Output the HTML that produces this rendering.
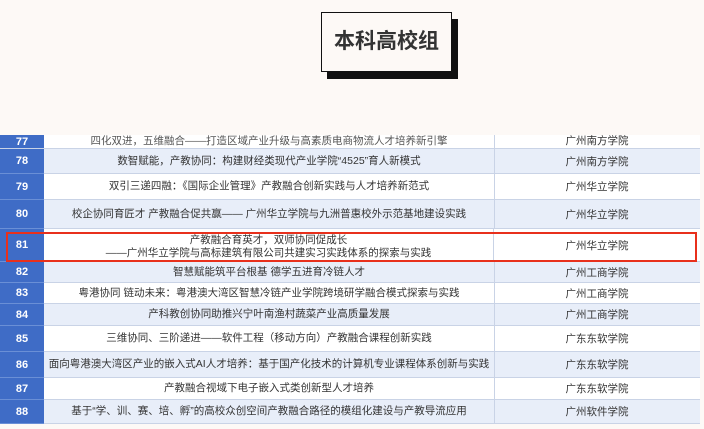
<!DOCTYPE html>
<html><head><meta charset="utf-8"><style>
body{margin:0;width:704px;height:429px;background:#fdf9f6;position:relative;overflow:hidden;font-family:"Liberation Sans","Noto Sans CJK SC",sans-serif;}
.box{position:absolute;left:321px;top:12px;width:131px;height:60px;background:#fdf9f6;border:1px solid #111;box-shadow:6px 7px 0 #111;box-sizing:border-box;}
.box span{position:absolute;left:0;right:0;top:17px;text-align:center;font-size:21px;font-weight:bold;color:#333;line-height:24px;}
.r{position:absolute;left:0;width:700px;border-bottom:1px solid #c9d3e6;box-sizing:border-box;}
.n{position:absolute;left:0;top:0;bottom:0;width:44px;background:#3f6cc6;color:#fff;font-size:11px;font-weight:bold;display:flex;align-items:center;justify-content:center;border-bottom:1px solid #6a8fd6;margin-bottom:-1px;}
.t{position:absolute;left:44px;width:450px;top:0;bottom:0;display:flex;align-items:center;justify-content:center;text-align:center;font-size:10.5px;color:#333;line-height:13px;border-right:1px solid #c9d3e6;}
.s{position:absolute;left:494px;width:206px;top:0;bottom:0;display:flex;align-items:center;justify-content:center;font-size:10.5px;color:#333;}
.l{background:#e8eef9}.w{background:#fff}
.red{position:absolute;left:6px;top:232px;width:691px;height:30px;border:2px solid #e8301c;box-sizing:border-box;}
</style></head><body>
<div class="box"><span>本科高校组</span></div>
<div class="r w" style="top:135px;height:14px;overflow:hidden"><div class="n" style="align-items:flex-end">77</div><div class="t" style="align-items:flex-end;color:#555">四化双进，五维融合——打造区域产业升级与高素质电商物流人才培养新引擎</div><div class="s" style="align-items:flex-end">广州南方学院</div></div>
<div class="r l" style="top:149px;height:25px"><div class="n">78</div><div class="t">数智赋能，产教协同：构建财经类现代产业学院“4525”育人新模式</div><div class="s">广州南方学院</div></div>
<div class="r w" style="top:174px;height:26px"><div class="n">79</div><div class="t">双引三递四融：《国际企业管理》产教融合创新实践与人才培养新范式</div><div class="s">广州华立学院</div></div>
<div class="r l" style="top:200px;height:29px"><div class="n">80</div><div class="t">校企协同育匠才 产教融合促共赢—— 广州华立学院与九洲普惠校外示范基地建设实践</div><div class="s">广州华立学院</div></div>
<div class="r w" style="top:229px;height:33px"><div class="n">81</div><div class="t" style="padding-top:3px;box-sizing:border-box">产教融合育英才，双师协同促成长<br>——广州华立学院与高标建筑有限公司共建实习实践体系的探索与实践</div><div class="s">广州华立学院</div></div>
<div class="r l" style="top:262px;height:21px"><div class="n">82</div><div class="t">智慧赋能筑平台根基 德学五进育冷链人才</div><div class="s">广州工商学院</div></div>
<div class="r w" style="top:283px;height:21px"><div class="n">83</div><div class="t">粤港协同 链动未来：粤港澳大湾区智慧冷链产业学院跨境研学融合模式探索与实践</div><div class="s">广州工商学院</div></div>
<div class="r l" style="top:304px;height:22px"><div class="n">84</div><div class="t">产科教创协同助推兴宁叶南渔村蔬菜产业高质量发展</div><div class="s">广州工商学院</div></div>
<div class="r w" style="top:326px;height:26px"><div class="n">85</div><div class="t">三维协同、三阶递进——软件工程（移动方向）产教融合课程创新实践</div><div class="s">广东东软学院</div></div>
<div class="r l" style="top:352px;height:26px"><div class="n">86</div><div class="t">面向粤港澳大湾区产业的嵌入式AI人才培养：基于国产化技术的计算机专业课程体系创新与实践</div><div class="s">广东东软学院</div></div>
<div class="r w" style="top:378px;height:22px"><div class="n">87</div><div class="t">产教融合视域下电子嵌入式类创新型人才培养</div><div class="s">广东东软学院</div></div>
<div class="r l" style="top:400px;height:24px"><div class="n">88</div><div class="t">基于“学、训、赛、培、孵”的高校众创空间产教融合路径的模组化建设与产教导流应用</div><div class="s">广州软件学院</div></div>
<div class="red"></div>
</body></html>
